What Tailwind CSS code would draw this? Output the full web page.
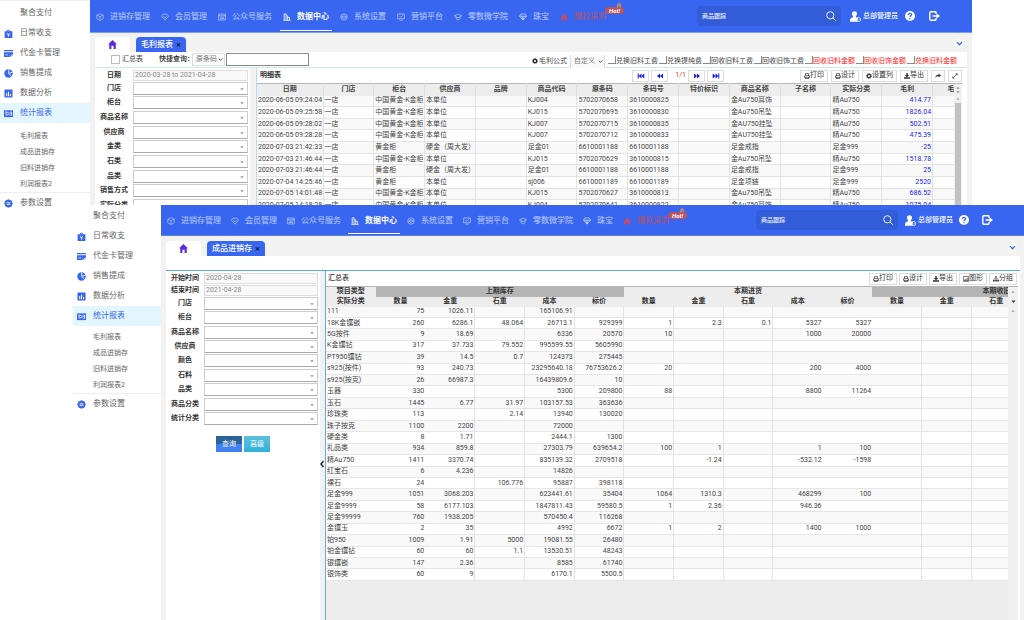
<!DOCTYPE html>
<html lang="zh-CN">
<head>
<meta charset="utf-8">
<title>珠宝进销存 - 统计报表</title>
<script src="https://cdn.jsdelivr.net/npm/@tailwindcss/browser@4"></script>
</head>
<body class="relative min-h-screen overflow-hidden bg-white font-['Roboto','Noto_Sans_CJK_SC',sans-serif] text-[7px] leading-[9px] text-[#444]">

<!-- Symbols shared by both windows -->
<svg class="hidden" aria-hidden="true">
  <symbol id="bag" viewBox="0 0 10 10"><path fill="currentColor" d="M3 2.5C3 .2 7 .2 7 2.5h2.3V10H.7V2.5zM4 2.500h2C6 1.300 4 1.300 4 2.500z"/><path stroke="#fff" stroke-width=".9" fill="none" d="M3.500 4.500L5 6l1.500-1.500M5 6v2.500M3.700 6.500h2.600"/></symbol>
  <symbol id="card" viewBox="0 0 10 10"><path fill="currentColor" d="M0 1h10v1.500H0zM0 3.500h10v3L7.500 9H0z"/><path stroke="#fff" stroke-width=".8" fill="none" d="M1.500 6.500h3M6 7.500l1.200 1L9.500 6"/></symbol>
  <symbol id="pie" viewBox="0 0 10 10"><circle cx="5" cy="5" r="4.700" fill="currentColor"/><path stroke="#fff" stroke-width="1" fill="none" d="M5.300.5v4.500l3 3M5.300 5l4-1.500"/></symbol>
  <symbol id="bars" viewBox="0 0 10 10"><rect x=".5" y=".5" width="9" height="9" rx=".6" fill="currentColor"/><path stroke="#fff" stroke-width="1.100" d="M3 4.500V8M5 3v5M7.200 5.500V8"/></symbol>
  <symbol id="report" viewBox="0 0 10 10"><path fill="currentColor" d="M0 1.500h10V9H0z"/><path stroke="#fff" stroke-width=".9" fill="none" d="M1 3.500h3L2.500 5l1.500 1.500H1.500M5.500 3.500v3.500M7 5h1.500M7 3.500h1.500V7H7"/></symbol>
  <symbol id="param" viewBox="0 0 10 10"><path fill="currentColor" d="M5 .3l3.400 1.300L9.700 5 8.400 8.400 5 9.700 1.600 8.400.3 5l1.300-3.400z"/><path stroke="#fff" stroke-width="1" d="M3 4.200h4M3 6h4"/></symbol>
  <symbol id="cube" viewBox="0 0 10 10"><path fill="none" stroke="currentColor" stroke-width=".8" d="M5 .7l4 2v4.600l-4 2-4-2V2.700zM1 2.700l4 2 4-2M5 4.700v4.600"/></symbol>
  <symbol id="heart" viewBox="0 0 10 10"><path fill="none" stroke="currentColor" stroke-width=".9" d="M2.500 1.500h5L9.500 4 5 9 .5 4zM3 4.200L5 6l2-1.800"/></symbol>
  <symbol id="news" viewBox="0 0 10 10"><path fill="none" stroke="currentColor" stroke-width=".9" d="M.8 1.300h8.400v7.400H.8zM.8 3.400h8.400M2.500 5.200h5M2.500 6.900h5"/></symbol>
  <symbol id="chart" viewBox="0 0 10 10"><path fill="none" stroke="currentColor" stroke-width="1" d="M1.500 9V1h2.300v8M3.800 3.500h2V9M5.800 5.500h2.400V9M.5 9.200h9"/></symbol>
  <symbol id="gear" viewBox="0 0 10 10"><circle cx="5" cy="5" r="4" fill="none" stroke="currentColor" stroke-width=".9"/><circle cx="5" cy="5" r="1.700" fill="none" stroke="currentColor" stroke-width=".9"/><path stroke="currentColor" stroke-width=".7" d="M1 5h2.300M6.700 5H9"/></symbol>
  <symbol id="screen" viewBox="0 0 10 10"><path fill="none" stroke="currentColor" stroke-width=".9" d="M.8 1.200h8.400v6H.8zM3 9h4M3 4l1.600 1.400L7.200 3"/></symbol>
  <symbol id="cap" viewBox="0 0 10 10"><path fill="none" stroke="currentColor" stroke-width=".9" d="M5 1.500l4.500 2L5 6 .5 3.500zM2.500 5v2.200L5 8.700l2.500-1.500V5"/></symbol>
  <symbol id="gem" viewBox="0 0 10 10"><path fill="none" stroke="currentColor" stroke-width="1" d="M2.300 1.200h5.400L9.400 4 5 9 .6 4zM.6 4h8.800M3.400 4L5 8.500 6.600 4"/></symbol>
  <symbol id="fire" viewBox="0 0 10 10"><path fill="currentColor" d="M5 .2c.4 2 3.800 3.300 3.800 6C8.800 8.500 7.500 9.800 6 10c.7-1.800-.2-2.500-1-3.700C4 7.500 3.300 8.500 4 10 2 9.700 1.200 8.200 1.200 6.500 1.200 4.300 4.600 3.600 5 .2z"/></symbol>
  <symbol id="search" viewBox="0 0 10 10"><circle cx="4.300" cy="4.300" r="3.600" fill="none" stroke="currentColor" stroke-width=".9"/><path stroke="currentColor" d="M7 7l2.600 2.600"/></symbol>
  <symbol id="user" viewBox="0 0 11 11"><path fill="currentColor" d="M4.500.3c3.300 0 2.800 3.800 1.400 5v1l2.100.8-.8 3.600H0C0 7.500.7 7.200 3.100 6.300v-1C1.700 4.100 1.200.3 4.500.3z"/><circle cx="8.500" cy="8.600" r="2.100" fill="none" stroke="currentColor" stroke-width=".8"/><path stroke="currentColor" stroke-width=".8" d="M7.800 8.500l.7.700 1-1.200"/></symbol>
  <symbol id="help" viewBox="0 0 10 10"><circle cx="5" cy="5" r="5" fill="#fff"/><path fill="none" stroke="#3866f0" stroke-width="1.300" d="M3.400 3.900C3.400 1.800 6.700 1.900 6.600 3.800 6.500 4.900 5 4.900 5 6.100M5 7v1.200"/></symbol>
  <symbol id="exit" viewBox="0 0 11 10"><path fill="none" stroke="currentColor" stroke-width="1.400" stroke-linejoin="round" d="M7 3V1.500Q7 .8 6.300.8H1.800Q.8.8.8 1.800v6.400q0 1 1 1h4.500Q7 9.200 7 8.500V7"/><path fill="currentColor" d="M3.500 4.200h4V2.300L11 5 7.500 7.700V5.800h-4z"/></symbol>
  <symbol id="home" viewBox="0 0 10 10"><path fill="currentColor" d="M5 0l4.800 4.700H8.600V10H6.200V6.500H3.800V10H1.400V4.700H.2z"/></symbol>
  <symbol id="chev" viewBox="0 0 10 10"><path fill="none" stroke="currentColor" stroke-width="1.800" d="M1.500 3L5 6.800 8.500 3"/></symbol>
  <symbol id="down" viewBox="0 0 10 10"><path fill="currentColor" d="M1 3h8L5 8z"/></symbol>
  <symbol id="up" viewBox="0 0 10 10"><path fill="currentColor" d="M1 7h8L5 2z"/></symbol>
  <symbol id="print" viewBox="0 0 10 10"><path fill="none" stroke="currentColor" stroke-width="1.200" d="M2.500 4.500V1h5v3.500M1 4.500h8v3.300H1zM2.500 7v2.300h5V7"/></symbol>
  <symbol id="cog" viewBox="0 0 10 10"><circle cx="5" cy="5" r="2.800" fill="none" stroke="currentColor" stroke-width="2"/><circle cx="5" cy="5" r="4.200" fill="none" stroke="currentColor" stroke-width="1.400" stroke-dasharray="1.700 1.600"/></symbol>
  <symbol id="export" viewBox="0 0 10 10"><path fill="currentColor" d="M3.800 0h2.400v3.300H9L5 7 1 3.300h2.800zM0 7h10v2.500H0z"/></symbol>
  <symbol id="image" viewBox="0 0 10 10"><path fill="none" stroke="currentColor" stroke-width="1.100" d="M.6 1h8.800v8H.6zM2 7.500L4.200 5l1.300 1.200L7.500 4 8.500 7.500z"/></symbol>
  <symbol id="group" viewBox="0 0 10 10"><path fill="currentColor" d="M3.700.5h2.600V3H3.700zM0 6.500h2.800V9H0zM3.600 6.500h2.800V9H3.600zM7.200 6.500H10V9H7.200z"/><path fill="none" stroke="currentColor" stroke-width=".9" d="M1.400 6.500V4.700h7.200v1.800M5 3v3.500"/></symbol>
  <symbol id="share" viewBox="0 0 10 10"><path fill="currentColor" d="M6 1l4 3.300L6 7.500V5.600C3 5.300 1.500 6.500 1 8.500 0 5 2.500 3 6 3z"/></symbol>
  <symbol id="expand" viewBox="0 0 10 10"><path stroke="currentColor" stroke-width="1.300" d="M2 8l6-6"/><path fill="currentColor" d="M5.500.8h3.700v3.700zM.8 5.500v3.700h3.700z"/></symbol>
  <symbol id="first" viewBox="0 0 12 10"><path fill="currentColor" d="M.5 1h1.700v8H.5zM6.800 1v8L2.200 5zM11.500 1v8L6.800 5z"/></symbol>
  <symbol id="prev" viewBox="0 0 12 10"><path fill="currentColor" d="M6 1v8L1 5zM11 1v8L6 5z"/></symbol>
  <symbol id="next" viewBox="0 0 12 10"><path fill="currentColor" d="M6 1v8l5-4zM1 1v8l5-4z"/></symbol>
  <symbol id="last" viewBox="0 0 12 10"><path fill="currentColor" d="M9.800 1h1.700v8H9.800zM5.200 1v8l4.600-4zM.5 1v8l4.700-4z"/></symbol>
</svg>

<!-- Window: gross profit report -->
<section class="absolute top-0 right-[52px] left-0 flex h-[212px] overflow-hidden bg-white" aria-label="毛利报表">
  <aside class="w-[90px] shrink-0 border-t border-[#eee] pt-[2px]" data-side="a"></aside>
  <div class="flex min-w-0 flex-1 flex-col bg-[#f2f2f2]">
    <header class="flex h-[33px] shrink-0 items-center border-b border-[#7d9cf7] bg-[#3866f0] pr-8 pl-[6px] text-white" data-head="a"></header>
    <div class="flex h-[19px] shrink-0 items-end pr-2 pl-[5px]" data-tabs="毛利报表"></div>
    <div class="mx-[5px] flex h-4 shrink-0 items-center border-b border-[#cfe6fb] bg-white pr-[10px] pl-4">
      <input id="sum" type="checkbox" class="size-[9px] appearance-none border border-[#bbb] bg-white"><label for="sum" class="ml-[2px]">汇总表</label>
      <label for="quick" class="ml-4 font-medium text-[#222]">快捷查询：</label>
      <span class="relative -ml-[2px]"><select id="quick" class="block h-[13px] w-[33px] appearance-none border border-[#ddd] bg-[#fafafa] pl-[3px] text-[7px] leading-[9px] text-[#777]"><option>原条码</option></select><svg class="pointer-events-none absolute top-1 right-[2px] size-[5px] text-[#444]"><use href="#chev"/></svg></span>
      <input aria-label="条码" class="ml-px h-[13px] w-[83px] border border-[#888] bg-white px-1">
      <div class="mt-[3px] ml-auto flex items-center gap-px whitespace-nowrap" id="formula"></div>
    </div>
    <div class="mx-[5px] flex min-h-0 flex-1 bg-white">
      <div class="w-[155px] shrink-0 pt-px" data-form="a"></div>
      <div class="w-[6px] shrink-0 bg-[#f2f2f2]"></div>
      <div class="flex min-w-0 flex-1 flex-col border-l border-[#b9d9f7] pr-[5px]">
        <div class="flex h-[15px] shrink-0 items-center pl-[3px]">
          <h2 class="font-bold text-[#333]">明细表</h2>
          <div class="mr-[76px] ml-auto flex items-center gap-[2px] text-[#1616f0]" id="pager"></div>
          <div class="flex gap-[3px]" data-tools="打印:print 设计:print 设置列:cog 导出:export :share :expand"></div>
        </div>
        <div class="flex min-h-0 flex-1 items-start overflow-hidden">
          <div class="min-w-0 flex-1 overflow-hidden">
            <table class="h-[129px] w-[727px] table-fixed border-collapse whitespace-nowrap" id="detail"></table>
          </div>
          <div class="h-full w-2 shrink-0 border-t border-[#b5b5b5] bg-[#f0f0f0]">
            <div class="flex h-[11px] flex-col items-center justify-center text-[#888]"><svg class="size-1"><use href="#up"/></svg><svg class="size-1"><use href="#down"/></svg></div>
            <svg class="mx-auto my-[2px] size-1 text-[#aaa]"><use href="#up"/></svg>
            <div class="ml-px h-[120px] w-[6px] bg-[#c1c1c1]"></div>
          </div>
        </div>
      </div>
    </div>
  </div>
</section>

<!-- Window: finished goods stock report -->
<section class="absolute top-[205px] right-0 bottom-0 left-[72px] flex overflow-hidden bg-white" aria-label="成品进销存">
  <aside class="w-[89px] shrink-0 pt-px pl-px" data-side="b"></aside>
  <div class="flex min-w-0 flex-1 flex-col bg-[#f2f2f2]">
    <header class="flex h-[31px] shrink-0 items-center border-b border-[#5c80e0] bg-[#3866f0] pr-[31px] pl-[6px] text-white" data-head="b"></header>
    <div class="flex h-5 shrink-0 items-end pr-[7px] pl-[5px]" data-tabs="成品进销存"></div>
    <div class="mr-1 ml-[5px] h-[15px] shrink-0 border-b border-[#5aa9f5] bg-white"></div>
    <div class="mr-1 ml-[5px] flex min-h-0 flex-1 bg-white">
      <div class="w-[154px] shrink-0 pt-px">
        <div data-form="b"></div>
        <div class="mt-[10px] flex gap-[2px] pl-[50px] text-white">
          <button class="h-4 w-[26px] bg-linear-to-b from-[#2a6496] from-50% to-[#4080f0] to-50%">查询</button>
          <button class="h-4 w-[26px] bg-linear-to-b from-[#5bc0de] to-[#2fb0d8]">高级</button>
        </div>
      </div>
      <div class="flex w-[5px] shrink-0 items-center bg-[#f2f2f2]"><button aria-label="收起" class="mt-9 text-[#222]"><svg class="h-2 w-1" viewBox="0 0 4 8"><path fill="none" stroke="currentColor" stroke-width="1.400" d="M3.500 1L1 4l2.500 3"/></svg></button></div>
      <div class="flex min-w-0 flex-1 flex-col border-l border-[#62acf2] pr-[2px]">
        <div class="flex h-[15px] shrink-0 items-center justify-between pr-px pl-[2px]">
          <h2 class="font-medium text-[#333]">汇总表</h2>
          <div class="flex gap-[2px]" data-tools="打印:print 设计:print 导出:export 图形:image 分组:group"></div>
        </div>
        <div class="flex min-h-0 flex-1 items-start bg-[#ededed]">
          <div class="min-w-0 flex-1 overflow-hidden">
            <table class="h-[295px] w-[745px] table-fixed border-collapse whitespace-nowrap" id="summary"></table>
          </div>
          <div class="flex w-[10px] shrink-0 flex-col items-center gap-[5px] self-stretch border-t border-[#b5b5b5] bg-[#f0f0f0] pt-[3px] text-[#999]">
            <svg class="size-1"><use href="#up"/></svg><svg class="size-[5px] text-[#333]"><use href="#down"/></svg><svg class="size-1"><use href="#up"/></svg>
          </div>
        </div>
      </div>
    </div>
  </div>
</section>

<script>
const $$ = s => document.querySelectorAll(s);
const icon = (n, c) => `<svg class="${c}" aria-hidden="true"><use href="#${n}"/></svg>`;

// Side menu
const menu = [['', '聚合支付'], ['bag', '日常收支'], ['card', '代金卡管理'], ['pie', '销售提成'], ['bars', '数据分析'], ['report', '统计报表']];
const row = (i, t, c) => `<a href="#" class="flex h-5 items-center gap-[7px] pl-1 text-[8px] leading-[10px] ${c}"><span class="size-[9px] shrink-0 text-[#3866f0]">${i ? icon(i, 'size-[9px]') : ''}</span>${t}</a>`;
$$('[data-side]').forEach(e => e.innerHTML = '<nav>' +
  menu.map(([i, t]) => row(i, t, i === 'report' ? 'bg-[#e3f6ff] text-[#3866f0]' : 'text-[#666]')).join('') +
  `<div class="border-b border-[#eee] ${e.dataset.side === 'a' ? 'pt-[5px]' : 'pt-[3px]'}">` + ['毛利报表', '成品进销存', '旧料进销存', '利润报表2'].map(t => `<a href="#" class="flex h-4 items-center pl-5 text-[#666]">${t}</a>`).join('') +
  '</div>' + row('param', '参数设置', 'text-[#666]') + '</nav>');

// Top bar
const nav = [['cube', '进销存管理'], ['heart', '会员管理'], ['news', '公众号服务'], ['chart', '数据中心'], ['gear', '系统设置'], ['screen', '营销平台'], ['cap', '零数微学院'], ['gem', '珠宝'], ['fire', '爆款采购']];
const bar = {
  a: { gap: 'gap-[11px]', box: 'w-36', user: 'ml-[9px]', help: 'ml-[7px]', exit: 'ml-[14px]' },
  b: { gap: 'gap-[10px]', box: 'w-[142px]', user: 'ml-[7px]', help: 'ml-[6px]', exit: 'ml-[13px]' }
};
$$('[data-head]').forEach(e => {
  const b = bar[e.dataset.head];
  e.innerHTML = `<nav class="flex h-full ${b.gap} text-[8px] leading-[10px] whitespace-nowrap">` + nav.map(([i, t]) => {
    const c = i === 'chart' ? 'font-bold text-white' : i === 'fire' ? 'text-[#b5526e]' : 'text-white/65';
    const extra = i === 'chart' ? '<span class="absolute -inset-x-[3px] bottom-px h-px bg-white"></span>'
      : i === 'fire' ? '<span class="absolute top-[7px] -right-[18px] rounded-full bg-[#b8535f] px-1 text-[6px] leading-[7px] font-bold text-white italic">Hot!<svg class="absolute -top-[5px] right-[2px] size-[6px] text-[#b98a68]"><use href="#fire"/></svg></span>' : '';
    return `<a href="#" class="relative flex items-center gap-[6px] pt-[2px] ${c}">${icon(i, i === 'fire' ? 'size-2 text-[#cf4a55]' : 'size-2')}${t}${extra}</a>`;
  }).join('') + `</nav>
  <div class="ml-auto flex items-center">
    <div class="flex h-5 ${b.box} items-center rounded-sm bg-[#335dd8] px-[5px]"><input type="search" aria-label="商品跟踪" placeholder="商品跟踪" class="min-w-0 flex-1 bg-transparent text-[6px] leading-[8px] font-medium outline-none placeholder:text-white/90">${icon('search', 'size-[10px]')}</div>
    ${icon('user', b.user + ' size-[11px]')}<span class="ml-[2px] font-medium">总部管理员</span>
    <button aria-label="帮助" class="${b.help}">${icon('help', 'size-[10px]')}</button>
    <button aria-label="退出" class="${b.exit}">${icon('exit', 'h-[10px] w-[11px]')}</button>
  </div>`;
});

// Tabs
$$('[data-tabs]').forEach(e => e.innerHTML = `
  <a href="#" aria-label="首页" class="flex h-[15px] w-[35px] items-center justify-center rounded-t bg-white text-[#5b2be0]">${icon('home', 'size-[9px]')}</a>
  <div class="ml-[6px] flex h-[15px] items-center gap-[3px] rounded-t-sm bg-[#3866f0] px-[5px] text-[8px] leading-[10px] font-medium text-white">${e.dataset.tabs}<button aria-label="关闭" class="text-[6px] leading-[8px] font-bold text-[#112]">✕</button></div>
  <button aria-label="更多" class="mb-1 ml-auto rounded-sm bg-[#f8f8f8] p-px text-[#3866f0]">${icon('chev', 'size-[7px]')}</button>`);

// Toolbars
$$('[data-tools]').forEach(e => e.innerHTML = e.dataset.tools.split(' ').map(s => {
  const [t, i] = s.split(':');
  return `<button ${t ? '' : `aria-label="${i === 'share' ? '分享' : '全屏'}"`} class="flex h-3 items-center border border-[#ddd] bg-white px-[3px] whitespace-nowrap text-[#333]">${icon(i, 'size-[6px]')}${t}</button>`;
}).join(''));
const pg = (i, t) => `<button aria-label="${t}" class="flex h-3 w-[17px] items-center justify-center border border-[#ddd] bg-white">${icon(i, 'h-[6px] w-2')}</button>`;
document.getElementById('pager').innerHTML = pg('first', '首页') + pg('prev', '上一页') + '<span class="ml-[5px] text-[#e33]">1/1</span>' + pg('next', '下一页') + pg('last', '末页');

// Formula options
document.getElementById('formula').innerHTML = icon('cog', 'size-[6px] text-[#222]') +
  `<label for="fm">毛利公式</label><span class="relative mx-[2px]"><select id="fm" class="block h-[13px] w-[35px] appearance-none border-x border-[#ddd] bg-[#fafafa] pl-[3px] text-[7px] leading-[9px] text-[#777]"><option>自定义</option></select><svg class="pointer-events-none absolute top-1 right-[2px] size-[5px] text-[#444]"><use href="#chev"/></svg></span>` +
  ['兑换旧料工费', '兑换提纯费', '回收旧料工费', '回收旧饰工费', '回收旧料金额', '回收旧饰金额', '兑换旧料金额'].map((t, i) =>
    `<label class="flex items-center ${i > 3 ? 'text-[#f22]' : ''}"><input type="checkbox" class="mb-[3px] size-2 appearance-none border-r border-b border-[#888] bg-white">${t}</label>`).join('');

// Filter forms
const forms = {
  a: { dates: [['日期', '2020-03-28 to 2021-04-28']], combos: ['门店', '柜台', '商品名称', '供应商', '金类', '石类', '品类', '销售方式', '实际分类'], list: 'grid h-[132px] auto-rows-fr' },
  b: { dates: [['开始时间', '2020-04-28'], ['结束时间', '2021-04-28']], combos: ['门店', '柜台', '商品名称', '供应商', '颜色', '石料', '品类', '商品分类', '统计分类'], list: 'grid h-[130px] auto-rows-fr' }
};
$$('[data-form]').forEach(e => {
  const k = e.dataset.form, f = forms[k];
  const lab = (t, id) => `<label for="${id}" class="w-[38px] shrink-0 text-center font-bold whitespace-nowrap text-[#333]">${t}</label>`;
  e.innerHTML = f.dates.map(([t, v], i) => `<div class="flex h-3 items-center pr-[2px]">${lab(t, k + 'd' + i)}<input id="${k}d${i}" value="${v}" class="h-[11px] min-w-0 flex-1 border border-[#ddd] bg-[#f9f9f9] px-px text-[#888]"></div>`).join('') +
    `<div class="${f.list}">` + f.combos.map((t, i) => `<div class="flex items-center pr-[2px]">${lab(t, k + 'c' + i)}<span class="relative flex-1"><select id="${k}c${i}" class="block h-[13px] w-full appearance-none border border-[#ccc] border-b-[#aaa] bg-white"><option></option></select><svg class="pointer-events-none absolute top-[5px] right-1 size-1 text-[#888]"><use href="#down"/></svg></span></div>`).join('') + '</div>';
});

// Detail table
const A = '中国黄金-K金柜', B = '本单位', C = '黄金柜', D = '硬金（周大发）';
const detail = [
  ['2020-06-05 09:24:04', '一店', A, B, '', 'KJ004', '5702070658', '3610000825', '', '金Au750耳饰', '', '精Au750', '414.77', ''],
  ['2020-06-05 09:25:58', '一店', A, B, '', 'KJ015', '5702070695', '3610000830', '', '金Au750吊坠', '', '精Au750', '1826.04', ''],
  ['2020-06-05 09:28:02', '一店', A, B, '', 'KJ007', '5702070715', '3610000835', '', '金AU750挂坠', '', '精Au750', '502.51', ''],
  ['2020-06-05 09:28:28', '一店', A, B, '', 'KJ007', '5702070712', '3610000833', '', '金AU750挂坠', '', '精Au750', '475.39', ''],
  ['2020-07-03 21:42:33', '一店', C, D, '', '足金01', '6610001188', '6610001188', '', '足金戒指', '', '足金999', '-25', ''],
  ['2020-07-03 21:46:44', '一店', A, B, '', 'KJ015', '5702070629', '3610000815', '', '金Au750吊坠', '', '精Au750', '1518.78', ''],
  ['2020-07-03 21:46:44', '一店', C, D, '', '足金01', '6610001188', '6610001188', '', '足金戒指', '', '足金999', '25', ''],
  ['2020-07-04 14:25:46', '一店', C, B, '', 'sj006', '6610001189', '6610001189', '', '足金项链', '', '足金999', '2520', ''],
  ['2020-07-05 14:01:48', '一店', A, B, '', 'KJ015', '5702070627', '3610000813', '', '金Au750吊坠', '', '精Au750', '686.52', ''],
  ['2020-07-05 14:18:28', '一店', A, B, '', 'KJ004', '5702070641', '3610000822', '', '金Au750耳饰', '', '精Au750', '1075.04', '']
];
document.getElementById('detail').innerHTML = '<thead><tr class="h-3 border-t border-[#b5b5b5] bg-[#ededed]">' +
  ['日期', '门店', '柜台', '供应商', '品牌', '商品代码', '原条码', '条码号', '特价标识', '商品名称', '子名称', '实际分类', '毛利', '毛利率'].map((t, i) => `<th class="border-r border-[#ddd] p-0 font-bold text-[#444] ${i ? '' : 'w-[66px]'}">${t}</th>`).join('') + '</tr></thead><tbody>' +
  detail.map(r => '<tr class="border-b border-[#e3e3e3] odd:bg-[#f9f9f9]">' + r.map((t, i) => `<td class="overflow-hidden border-r border-[#e3e3e3] px-px py-0 ${i === 12 ? 'text-right text-[#1a1aff]' : ''}">${t}</td>`).join('') + '</tr>').join('') + '</tbody>';

// Summary table: one line per category, fields separated by |
const summary = `111|75|1026.11||165106.91
18K金镶嵌|260|6286.1|48.064|26713.1|929399|1|2.3|0.1|5327|5327
5G按件|9|18.69||6336|20570|10|||1000|20000
K金镶钻|317|37.733|79.552|995599.55|5605990
PT950镶钻|39|14.5|0.7|124373|275445
s925(按件)|93|240.73||23295640.18|76753626.2|20|||200|4000
s925(按克)|26|66987.3||16439809.6|10
玉器|330|||5300|209800|88|||8800|11264
玉石|1445|6.77|31.97|103157.53|363636
珍珠类|113||2.14|13940|130020
珠子按克|1100|2200||72000
硬金类|8|1.71||2444.1|1300
礼品类|934|859.8||27303.79|639654.2|100|1||1|100
精Au750|1411|3370.74||835139.32|2709518||-1.24||-532.12|-1598
红宝石|6|4.236||14826
裸石|24||106.776|95887|398118
足金999|1051|3068.203||623441.61|35404|1064|1310.3||468299|100
足金9999|58|6177.103||1847811.43|59580.5|1|2.36||946.36
足金99999|760|1938.205||570450.4|116268
金镶玉|2|35||4992|6672|1|2||1400|1000
铂950|1009|1.91|5000|19081.55|26480
铂金镶钻|60|60|1.1|13530.51|48243
银镶嵌|147|2.36||8585|61740
银饰类|60|9||6170.1|5500.5`.split('\n').map(l => l.split('|'));
const cols = ['数量', '金重', '石重', '成本', '标价'];
const ruled = [2, 3, 4, 5, 6, 7, 8, 11, 12];
document.getElementById('summary').innerHTML = '<colgroup>' + '<col>'.repeat(15) + '</colgroup><thead><tr class="h-[10px] border-t border-[#b5b5b5] bg-[#ededed] text-[#333]"><th class="p-0 font-bold">项目类型</th><th colspan="5" class="bg-[#b5b5b5] p-0 font-bold">上期库存</th><th colspan="5" class="p-0 font-bold">本期进货</th><th colspan="4" class="bg-[#b5b5b5] p-0 pl-[50px] font-bold">本期收旧</th></tr><tr class="h-[10px] bg-[#ededed] text-[#333]">' +
  ['实际分类', ...cols, ...cols, ...cols.slice(0, 4)].map(t => `<th class="p-0 font-bold">${t}</th>`).join('') + '</tr></thead><tbody>' +
  summary.map(r => '<tr class="border-b border-[#e6e6e6] bg-white odd:bg-[#f9f9f9]">' + Array.from({ length: 15 }, (_, i) => `<td class="px-px py-0 ${i ? 'text-right' : ''} ${ruled.includes(i) ? 'border-r border-[#e3e3e3]' : ''}">${r[i] || ''}</td>`).join('') + '</tr>').join('') + '</tbody>';
</script>
</body>
</html>
